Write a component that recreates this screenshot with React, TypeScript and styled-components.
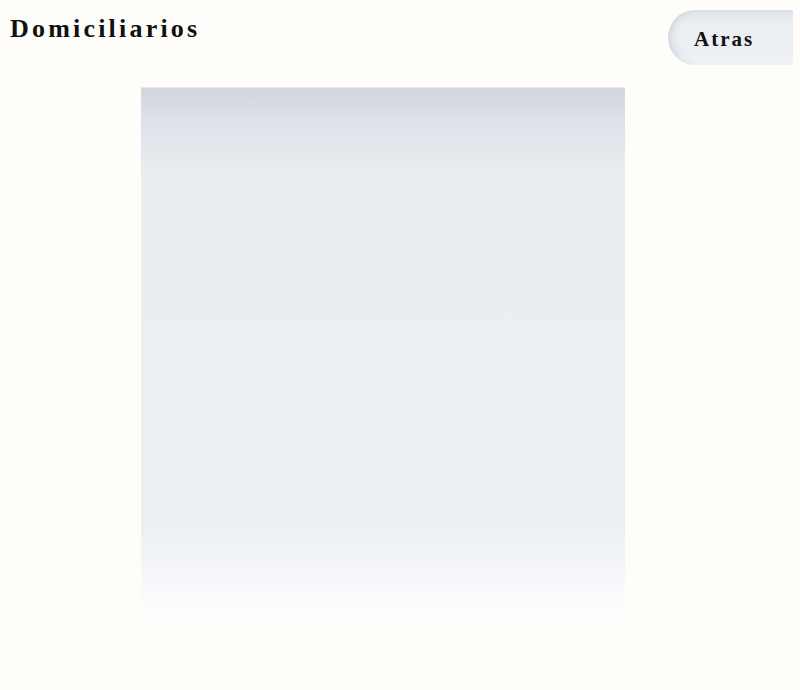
import React from "react";
import styled, { createGlobalStyle } from "styled-components";

const Global = createGlobalStyle`
  html, body { margin: 0; padding: 0; background: #fefdf9; }
  body { font-family: "Liberation Serif", "DejaVu Serif", serif; }
`;

const Page = styled.div`
  width: 800px;
  min-height: 690px;
  background: #fefdf9;
`;

const Header = styled.header`
  display: flex;
  justify-content: space-between;
  align-items: flex-start;
  padding: 10px 7px 0 10px;
  height: 55px;
`;

const Title = styled.h1`
  margin: 0;
  padding-top: 3px;
  font-family: "Liberation Serif", serif;
  font-weight: 700;
  font-size: 26px;
  letter-spacing: 3.2px;
  color: #111;
  line-height: 32px;
`;

const BackButton = styled.button`
  width: 125px;
  height: 55px;
  border: none;
  border-radius: 28px 0 0 28px;
  padding: 3px 0 0 26px;
  text-align: left;
  font-family: "Liberation Serif", serif;
  font-weight: 700;
  font-size: 21px;
  letter-spacing: 2px;
  color: #111;
  cursor: pointer;
  background: linear-gradient(180deg, #dfe2ea 0%, #ebeef2 25%, #ebeef2 75%, #f3f4f7 100%);
  box-shadow: inset 7px 0 8px -5px rgba(140, 150, 180, 0.35);
`;

const Body = styled.main`
  padding: 22px 0 0 141px;
`;

const Panel = styled.section`
  width: 484px;
  height: 535px;
  background: linear-gradient(
    180deg,
    #d2d5df 0%,
    #e0e4ea 8%,
    #eaeef2 17%,
    #ebeef2 81%,
    #f4f6f9 90%,
    #fbfcfe 97%,
    #fcfdfe 100%
  );
  box-shadow: inset 0 1px 0 #e6e8ee;
`;

export default function App() {
  return (
    <Page>
      <Global />
      <Header>
        <Title>Domiciliarios</Title>
        <BackButton>Atras</BackButton>
      </Header>
      <Body>
        <Panel />
      </Body>
    </Page>
  );
}
